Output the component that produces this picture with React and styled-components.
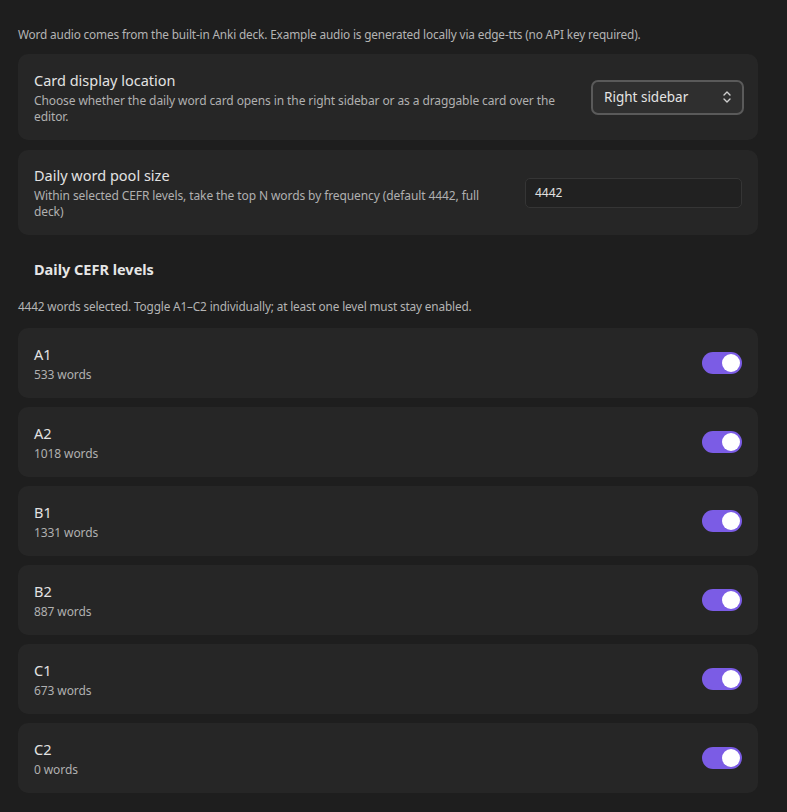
import React from 'react';
import styled, { createGlobalStyle } from 'styled-components';

const GlobalStyle = createGlobalStyle`
    html, body {
        margin: 0;
        background: #1e1e1e;
    }
    body {
        font-family: "Noto Sans", "Open Sans", sans-serif;
        color: #dadada;
    }
`;

const Page = styled.div`
    width: 740px;
    padding: 25px 29px 19px 18px;
    display: flex;
    flex-direction: column;
`;

const Note = styled.p`
    margin: 0 0 ${p => p.gap || 0}px;
    font-size: 11.8px;
    line-height: 18px;
    color: #b4b4b4;
    letter-spacing: -0.15px;
`;

const Card = styled.div`
    background: #262626;
    border-radius: 10px;
    padding: 15px ${p => p.padRight || 16}px 15px 16px;
    min-height: ${p => p.height || 0}px;
    box-sizing: border-box;
    display: flex;
    align-items: center;
    justify-content: space-between;
    gap: 20px;
    margin-bottom: ${p => p.gap || 9}px;
`;

const Info = styled.div`
    display: flex;
    flex-direction: column;
    max-width: ${p => p.narrow ? '460px' : '530px'};
`;

const Title = styled.div`
    font-size: 14.5px;
    line-height: 20px;
    color: #e2e2e2;
    margin-bottom: 3px;
`;

const Desc = styled.div`
    font-size: 12px;
    line-height: 16px;
    color: #b0b0b0;
    letter-spacing: -0.1px;
`;

const SelectBox = styled.div`
    width: 153px;
    height: 35px;
    box-sizing: border-box;
    border: 2px solid #5a5a5a;
    border-radius: 7px;
    background: #2f2f2f;
    display: flex;
    align-items: center;
    justify-content: space-between;
    padding: 0 10px 0 11px;
    font-size: 13.5px;
    color: #e4e4e4;
    flex-shrink: 0;
`;

const NumberInput = styled.div`
    width: 217px;
    height: 30px;
    box-sizing: border-box;
    border: 1px solid #353535;
    border-radius: 5px;
    background: #212121;
    display: flex;
    align-items: center;
    padding: 0 9px;
    font-size: 12px;
    color: #e0e0e0;
    flex-shrink: 0;
`;

const SectionHeading = styled.h3`
    margin: 15px 0 18px 16px;
    font-size: 14.5px;
    line-height: 20px;
    font-weight: 700;
    color: #e6e6e6;
`;

const Toggle = styled.div`
    width: 40px;
    height: 22px;
    border-radius: 11px;
    background: ${p => p.on ? '#7b5ce5' : '#444'};
    display: flex;
    align-items: center;
    justify-content: ${p => p.on ? 'flex-end' : 'flex-start'};
    padding: 0 2px;
    box-sizing: border-box;
    flex-shrink: 0;
`;

const Knob = styled.div`
    width: 18px;
    height: 18px;
    border-radius: 50%;
    background: #fff;
`;

const Chevrons = () => (
    <svg width="10" height="14" viewBox="0 0 10 14" fill="none" stroke="#cfcfcf" strokeWidth="1.4" strokeLinecap="round" strokeLinejoin="round">
        <path d="M2 5 L5 2 L8 5" />
        <path d="M2 9 L5 12 L8 9" />
    </svg>
);

const levels = [
    { name: 'A1', count: 533 },
    { name: 'A2', count: 1018 },
    { name: 'B1', count: 1331 },
    { name: 'B2', count: 887 },
    { name: 'C1', count: 673 },
    { name: 'C2', count: 0 },
];

const App = () => (
    <>
        <GlobalStyle />
        <Page>
            <Note gap={11}>Word audio comes from the built-in Anki deck. Example audio is generated locally via edge-tts (no API key required).</Note>
            <Card height={86} padRight={14} gap={10}>
                <Info>
                    <Title>Card display location</Title>
                    <Desc>Choose whether the daily word card opens in the right sidebar or as a draggable card over the editor.</Desc>
                </Info>
                <SelectBox>
                    Right sidebar
                    <Chevrons />
                </SelectBox>
            </Card>
            <Card height={85}>
                <Info narrow>
                    <Title>Daily word pool size</Title>
                    <Desc>Within selected CEFR levels, take the top N words by frequency (default 4442, full deck)</Desc>
                </Info>
                <NumberInput>4442</NumberInput>
            </Card>
            <SectionHeading>Daily CEFR levels</SectionHeading>
            <Note gap={13}>4442 words selected. Toggle A1–C2 individually; at least one level must stay enabled.</Note>
            {levels.map(l => (
                <Card key={l.name} height={70}>
                    <Info>
                        <Title>{l.name}</Title>
                        <Desc>{l.count} words</Desc>
                    </Info>
                    <Toggle on>
                        <Knob />
                    </Toggle>
                </Card>
            ))}
        </Page>
    </>
);

export default App;
